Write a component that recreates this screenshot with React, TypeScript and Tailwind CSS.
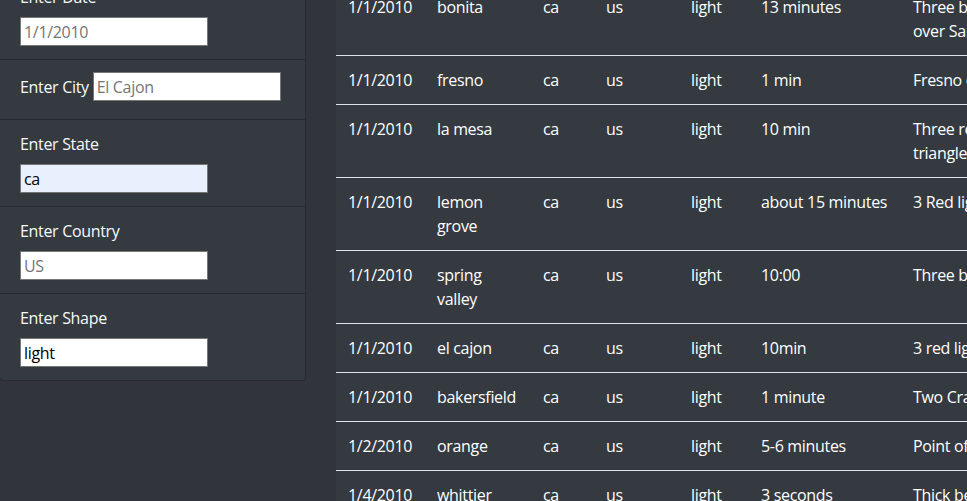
import React from "react";

const font = { fontFamily: '"Open Sans", "Noto Sans", sans-serif' };

const sightings = [
    { date: "1/1/2010", city: ["bonita"], state: "ca", country: "us", shape: "light", duration: "13 minutes", comments: ["Three bright orange lights moving slowly in a line", "over San Diego bay toward the east"] },
    { date: "1/1/2010", city: ["fresno"], state: "ca", country: "us", shape: "light", duration: "1 min", comments: ["Fresno orange light hovering then disappearing"] },
    { date: "1/1/2010", city: ["la mesa"], state: "ca", country: "us", shape: "light", duration: "10 min", comments: ["Three red lights in the shape of a perfect", "triangle over the hills"] },
    { date: "1/1/2010", city: ["lemon", "grove"], state: "ca", country: "us", shape: "light", duration: "about 15 minutes", comments: ["3 Red lights seen after midnight"] },
    { date: "1/1/2010", city: ["spring", "valley"], state: "ca", country: "us", shape: "light", duration: "10:00", comments: ["Three bright lights drifting to the south"] },
    { date: "1/1/2010", city: ["el cajon"], state: "ca", country: "us", shape: "light", duration: "10min", comments: ["3 red lights in formation over the valley"] },
    { date: "1/1/2010", city: ["bakersfield"], state: "ca", country: "us", shape: "light", duration: "1 minute", comments: ["Two Craft with bright white lights"] },
    { date: "1/2/2010", city: ["orange"], state: "ca", country: "us", shape: "light", duration: "5-6 minutes", comments: ["Point of light moving erratically"] },
    { date: "1/4/2010", city: ["whittier"], state: "ca", country: "us", shape: "light", duration: "3 seconds", comments: ["Thick beam of light from the sky"] },
];

function Field({ label, placeholder, value, autofill, inline }: { label: string; placeholder?: string; value?: string; autofill?: boolean; inline?: boolean }) {
    const input = (
        <input
            readOnly
            placeholder={placeholder}
            defaultValue={value}
            className={`h-[29px] w-[188px] border border-[#767676] px-[3px] text-[16px] tracking-[-0.02em] text-black placeholder:text-[#757575] outline-none ${autofill ? "bg-[#e8f0fe]" : "bg-white"}`}
            style={font}
        />
    );
    if (inline) {
        return (
            <li className="border-b border-black/25 px-5 pt-[12px] pb-[18px]">
                <div className="flex items-center gap-[4px]">
                    <label className="text-[16px] leading-6 text-[#f8f9fa]">{label}</label>
                    {input}
                </div>
            </li>
        );
    }
    return (
        <li className="border-b border-black/25 px-5 pt-[12px] pb-[13px] last:border-b-0">
            <label className="mb-2 block text-[16px] leading-6 text-[#f8f9fa]">{label}</label>
            {input}
        </li>
    );
}

export default function App() {
    return (
        <div className="h-[501px] overflow-hidden bg-[#31353b] tracking-[-0.02em]" style={font}>
            <div className="-mt-[28px] flex items-start">
                {/* Filters */}
                <aside className="-ml-px w-[307px] shrink-0 rounded-b-[4px] border border-black/25 bg-[#343a40]">
                    <ul>
                        <Field label="Enter Date" placeholder="1/1/2010" />
                        <Field label="Enter City" placeholder="El Cajon" inline />
                        <Field label="Enter State" value="ca" autofill />
                        <Field label="Enter Country" placeholder="US" />
                        <Field label="Enter Shape" value="light" />
                    </ul>
                </aside>

                {/* Results */}
                <div className="ml-[30px] mt-[11px] shrink-0">
                    <table className="w-[1300px] table-fixed border-collapse bg-[#343a40] text-[16px] leading-6 text-white">
                        <colgroup>
                            <col className="w-[89px]" />
                            <col className="w-[106px]" />
                            <col className="w-[63px]" />
                            <col className="w-[85px]" />
                            <col className="w-[70px]" />
                            <col className="w-[152px]" />
                            <col />
                        </colgroup>
                        <tbody>
                            {sightings.map((s, i) => (
                                <tr key={i} className="border-b border-[#dee2e6] align-top">
                                    <td className="whitespace-nowrap px-3 py-3">{s.date}</td>
                                    <td className="whitespace-nowrap px-3 py-3">
                                        {s.city.map((c, j) => <div key={j}>{c}</div>)}
                                    </td>
                                    <td className="px-3 py-3">{s.state}</td>
                                    <td className="px-3 py-3">{s.country}</td>
                                    <td className="px-3 py-3">{s.shape}</td>
                                    <td className="whitespace-nowrap px-3 py-3">{s.duration}</td>
                                    <td className="whitespace-nowrap px-3 py-3">
                                        {s.comments.map((c, j) => <div key={j}>{c}</div>)}
                                    </td>
                                </tr>
                            ))}
                        </tbody>
                    </table>
                </div>
            </div>
        </div>
    );
}
